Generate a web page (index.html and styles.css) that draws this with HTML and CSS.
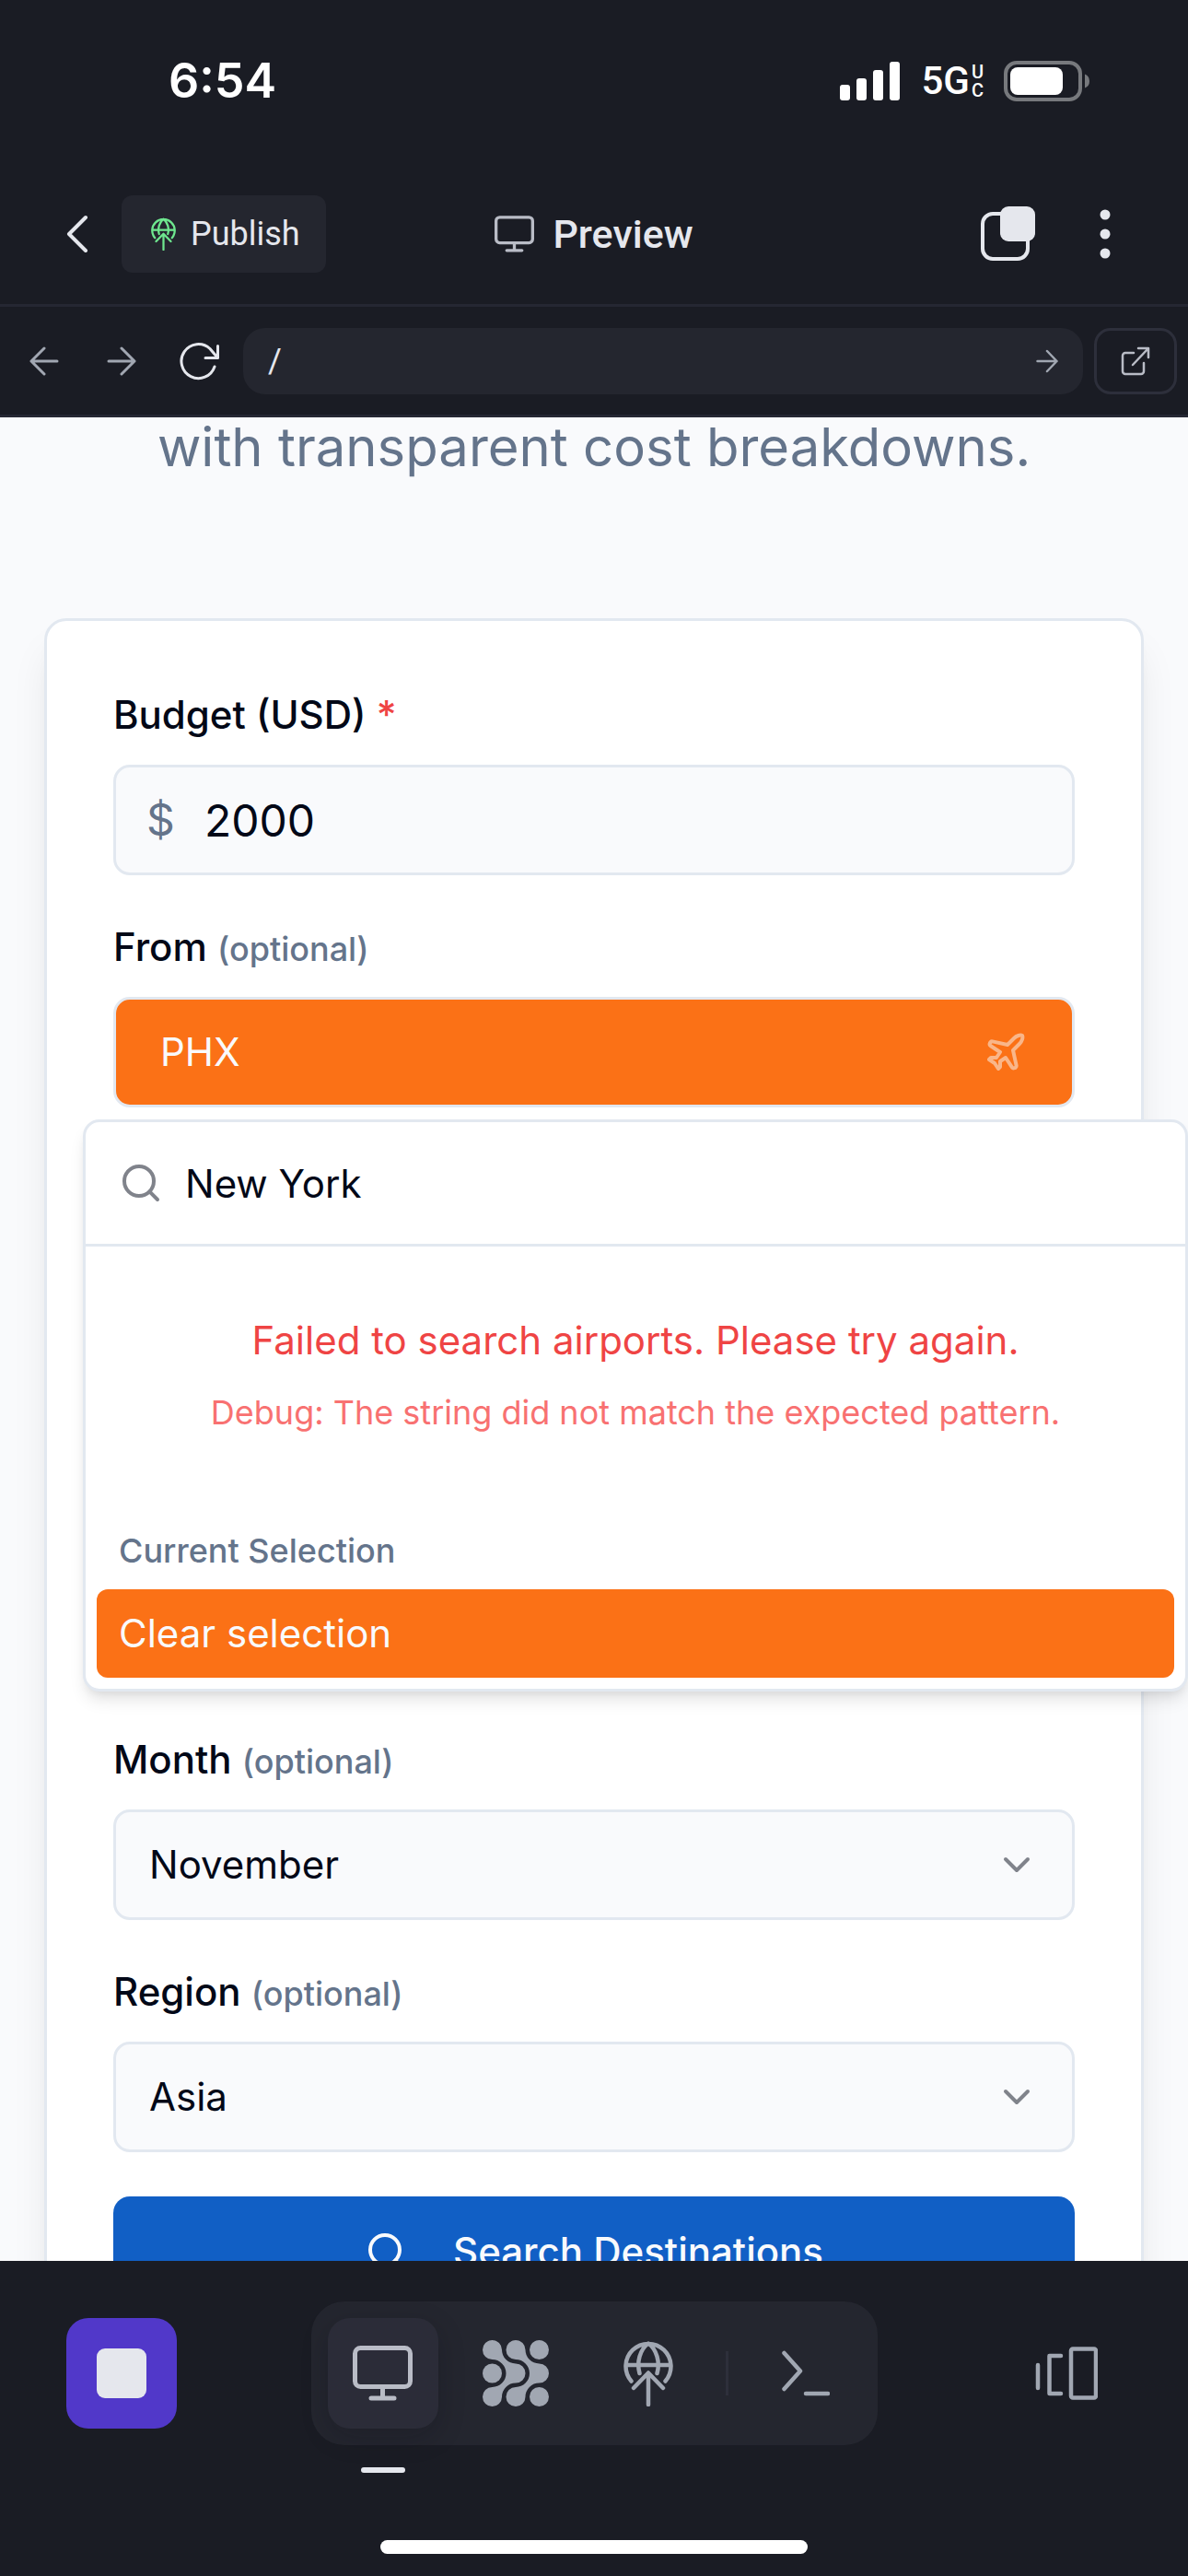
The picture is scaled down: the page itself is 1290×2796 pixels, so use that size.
FILE: index.html
```html
<!DOCTYPE html>
<html lang="en">
<head>
<meta charset="utf-8">
<meta name="viewport" content="width=device-width, initial-scale=1">
<title>Preview</title>
<link rel="stylesheet" href="styles.css">
</head>
<body>
<svg class="sprite" aria-hidden="true">
  <symbol id="monitor" viewBox="0 0 65 60">
    <rect x="2.5" y="2.5" width="60" height="42" rx="6"/>
    <path d="M32.5 45v11M20 57h25"/>
  </symbol>
  <symbol id="publish" viewBox="0 0 54 72">
    <path d="M8.5 44.5A24.500 24.500 0 1 1 45.500 44.500M3 27h48M17.500 36C14 24 18 10 27 3.500C36 10 40 24 36.500 36"/>
    <path d="M11 52L27 35.500L43 52M27 37v33"/>
  </symbol>
  <symbol id="search" viewBox="0 0 24 24">
    <circle cx="11" cy="11" r="8"/><path d="m21 21-4.300-4.300"/>
  </symbol>
  <symbol id="chevron" viewBox="0 0 24 24"><path d="m6 9 6 6 6-6"/></symbol>
</svg>

<div class="app">
  <div class="status">
    <time class="clock">6:54</time>
    <div class="indicators">
      <svg width="66" height="42" viewBox="0 0 66 42" fill="#fff" aria-hidden="true">
        <rect x="0" y="25" width="11" height="17" rx="3"/><rect x="18" y="18" width="11" height="24" rx="3"/>
        <rect x="36" y="9" width="11" height="33" rx="3"/><rect x="54" y="0" width="11" height="42" rx="3"/>
      </svg>
      <span class="network">5G<span class="carrier"><span>U</span><span>C</span></span></span>
      <svg width="94" height="44" viewBox="0 0 94 44" aria-hidden="true">
        <rect x="2" y="2" width="81" height="40" rx="12" fill="none" stroke="#77797d" stroke-width="4"/>
        <rect x="7" y="7" width="57" height="30" rx="8" fill="#fff"/>
        <path d="M88 14.500q5 2 5 7.500t-5 7.500z" fill="#77797d"/>
      </svg>
    </div>
  </div>

  <header class="topbar">
    <div class="side">
      <button class="tool" aria-label="Back"><svg class="line light" width="24" height="42" viewBox="0 0 24 42" stroke-width="4"><path d="M21 3L3 21l18 18"/></svg></button>
      <button class="publish"><svg class="line" width="27" height="36" stroke-width="4.500"><use href="#publish"/></svg>Publish</button>
    </div>
    <h1 class="title"><svg class="line" width="43" height="40" stroke-width="5"><use href="#monitor"/></svg>Preview</h1>
    <div class="side end">
      <button class="tool" aria-label="Tabs"><svg width="60" height="60" viewBox="0 0 60 60"><rect x="3" y="8" width="49" height="49" rx="11" fill="none" stroke="#e5e7ed" stroke-width="4"/><rect x="22" y="0" width="38" height="38" rx="9" fill="#e5e7ed"/></svg></button>
      <button class="tool wide" aria-label="More"><svg width="12" height="54" viewBox="0 0 12 54" fill="#e5e7ed"><circle cx="6" cy="6" r="5.500"/><circle cx="6" cy="27" r="5.500"/><circle cx="6" cy="48" r="5.500"/></svg></button>
    </div>
  </header>

  <nav class="addressbar" aria-label="Browser">
    <button class="tool" aria-label="Previous page"><svg class="line muted" width="32" height="32" viewBox="0 0 32 32" stroke-width="3"><path d="M30 16H2M16 2L2 16l14 14"/></svg></button>
    <button class="tool" aria-label="Next page"><svg class="line muted" width="32" height="32" viewBox="0 0 32 32" stroke-width="3"><path d="M2 16h28M16 2l14 14-14 14"/></svg></button>
    <button class="tool" aria-label="Reload"><svg class="line light" width="44" height="42" viewBox="0 0 44 42" stroke-width="3"><path d="M39 27A18.500 18.500 0 1 1 34 7.500L42.500 17.500M42.500 4.500v13H29"/></svg></button>
    <div class="address">
      <input class="path" type="text" value="/" aria-label="Path">
      <button class="go" aria-label="Go"><svg class="line muted" width="24" height="26" viewBox="0 0 24 26" stroke-width="2.500"><path d="M1.500 13h21M12 2l10.500 11L12 24"/></svg></button>
    </div>
    <button class="external" aria-label="Open in new tab"><svg class="line" width="32" height="32" viewBox="0 0 32 32" stroke-width="2.500"><path d="M14 7H5a3 3 0 0 0-3 3v17a3 3 0 0 0 3 3h17a3 3 0 0 0 3-3V18M13 20L30 2M19 2h11v10"/></svg></button>
  </nav>

  <main class="preview">
    <p class="intro">with transparent cost breakdowns.</p>
    <form class="card">
      <div class="field">
        <label class="label" for="budget">Budget (USD) <span class="required">*</span></label>
        <div class="control">
          <span class="currency">$</span>
          <input class="amount" id="budget" type="text" value="2000">
        </div>
      </div>
      <div class="field">
        <label class="label" for="from">From <span class="optional">(optional)</span></label>
        <button class="origin" id="from" type="button">PHX
          <svg class="line faded" width="48" height="48" viewBox="0 0 24 24" stroke-width="2"><path d="M17.800 19.200 16 11l3.500-3.500C21 6 21.500 4 21 3c-1-.5-3 0-4.500 1.500L13 8 4.800 6.200c-.5-.1-.9.1-1.100.5l-.3.5c-.2.5-.1 1 .3 1.300L9 12l-2 3H4l-1 1 3 2 2 3 1-1v-3l3-2 3.500 5.300c.3.4.8.5 1.300.3l.5-.2c.4-.3.6-.7.5-1.200z"/></svg>
        </button>
      </div>
      <div class="popover">
        <div class="query">
          <svg class="line gray" width="48" height="48" stroke-width="2"><use href="#search"/></svg>
          <input class="query-input" type="text" value="New York" aria-label="Search airports">
        </div>
        <div class="failure">
          <p class="error">Failed to search airports. Please try again.</p>
          <p class="debug">Debug: The string did not match the expected pattern.</p>
        </div>
        <div class="group">
          <h2 class="group-title">Current Selection</h2>
          <button class="option" type="button">Clear selection</button>
        </div>
      </div>
      <div class="field">
        <label class="label" for="month">Month <span class="optional">(optional)</span></label>
        <div class="control">
          <select class="select" id="month"><option>November</option></select>
          <svg class="line gray caret" width="48" height="48" stroke-width="2"><use href="#chevron"/></svg>
        </div>
      </div>
      <div class="field">
        <label class="label" for="region">Region <span class="optional">(optional)</span></label>
        <div class="control">
          <select class="select" id="region"><option>Asia</option></select>
          <svg class="line gray caret" width="48" height="48" stroke-width="2"><use href="#chevron"/></svg>
        </div>
      </div>
      <button class="submit" type="button"><svg class="line" width="48" height="48" stroke-width="2"><use href="#search"/></svg>Search Destinations</button>
    </form>
  </main>

  <footer class="dock">
    <div class="dock-row">
      <button class="tile stop" aria-label="Stop"><span class="stop-mark"></span></button>
      <div class="tabs">
        <button class="tile active" aria-label="Preview"><svg class="line" width="65" height="60" stroke-width="5"><use href="#monitor"/></svg></button>
        <button class="tile" aria-label="Agent">
          <svg width="72" height="72" viewBox="0 0 72 72" fill="currentColor">
            <circle cx="10.500" cy="36" r="10.500"/><circle cx="61.500" cy="10.500" r="10.500"/><circle cx="61.500" cy="61.500" r="10.500"/>
            <path id="link" d="M10.500 0A10.500 10.500 0 0 0 10.500 21A15 15 0 0 1 10.500 51A10.500 10.500 0 1 0 21 61.500A15 15 0 0 1 36 46.500A10.500 10.500 0 0 0 36 25.500A15 15 0 0 1 21 10.500A10.500 10.500 0 0 0 10.500 0z"/>
            <use href="#link" x="25.500"/>
          </svg>
        </button>
        <button class="tile" aria-label="Publishing"><svg class="line" width="54" height="72" stroke-width="4.500"><use href="#publish"/></svg></button>
        <span class="divider"></span>
        <button class="tile" aria-label="Console"><svg class="line" width="52" height="50" viewBox="0 0 52 50" stroke-width="4.500"><path d="M2.500 3L20 22.500 2.500 42M26 47h24"/></svg></button>
      </div>
      <button class="tile" aria-label="All tabs"><svg class="line" width="68" height="58" viewBox="0 0 68 58" stroke-width="4.500"><path d="M3 20v25M28 10H15.500v41H28"/><rect x="39" y="2.500" width="27" height="53" rx="2"/></svg></button>
    </div>
    <div class="home"></div>
  </footer>
</div>
</body>
</html>
```
FILE: styles.css
```css
* { box-sizing: border-box; }
body { margin: 0; background: #1a1c24; font-family: Inter, "Noto Sans", sans-serif; }
button, input, select { font: inherit; color: inherit; background: none; border: 0; padding: 0; margin: 0; outline: 0; }
h1, h2, p { margin: 0; font-weight: inherit; }
svg { display: block; flex: none; }

.sprite { position: absolute; width: 0; height: 0; }
.line { fill: none; stroke: currentColor; stroke-linecap: round; stroke-linejoin: round; }
.light { color: #e5e7ed; }
.muted { color: #a1a7b2; }
.gray { color: #80838b; }
.faded { opacity: 0.5; }

.app { display: flex; flex-direction: column; height: 100vh; overflow: hidden; color: #e5e7ed; }

/* status bar */
.status { display: flex; align-items: center; justify-content: space-between; height: 177px; padding: 0 106px 2px 183px; color: #fff; flex: none; }
.clock { font-size: 52px; font-weight: 600; line-height: 64px; }
.indicators { display: flex; align-items: center; gap: 22px; }
.network { display: flex; align-items: center; gap: 2px; font: 500 42px/44px Roboto, sans-serif; }
.carrier { display: flex; flex-direction: column; font-size: 20px; line-height: 20px; }

/* editor header */
.topbar { display: grid; grid-template-columns: 1fr auto 1fr; align-items: center; height: 156px; padding: 0 48px; border-bottom: 3px solid #252733; flex: none; font-family: Roboto, sans-serif; }
.side { display: flex; align-items: center; gap: 12px; }
.end { justify-content: flex-end; gap: 28px; }
.tool { display: flex; align-items: center; justify-content: center; width: 72px; height: 72px; flex: none; }
.wide { width: 84px; }
.publish { display: flex; align-items: center; gap: 16px; height: 84px; padding: 0 28px 0 32px; border-radius: 12px; background: #24262f; font-size: 36px; }
.publish svg { color: #6ee78f; }
.title { display: flex; align-items: center; gap: 20px; font-size: 43px; font-weight: 500; line-height: 54px; }
.title svg { color: #b9bcc6; }

.addressbar { display: flex; align-items: center; gap: 12px; height: 120px; padding: 0 12px; border-bottom: 3px solid #252733; flex: none; }
.address { display: flex; align-items: center; flex: 1; min-width: 0; height: 72px; padding: 0 27px; border-radius: 24px; background: #24262f; }
.path { flex: 1; min-width: 0; font: 36px/48px Roboto, sans-serif; }
.external { display: flex; align-items: center; justify-content: center; width: 90px; height: 72px; border: 3px solid #2d2f3b; border-radius: 18px; color: #b9bcc6; }

/* previewed page */
.preview { flex: 1; min-height: 0; overflow: hidden; padding: 0 48px; background: #f9fafc; color: #020817; font-size: 42px; line-height: 60px; }
.intro { margin-bottom: 154px; color: #64748b; font-size: 58px; line-height: 64px; text-align: center; }
.card { display: flex; flex-direction: column; padding: 72px; border: 3px solid #e2e8f0; border-radius: 24px; background: #fff; box-shadow: 0 30px 45px -9px rgb(0 0 0 / 0.1), 0 12px 18px -12px rgb(0 0 0 / 0.1); }
.field { display: flex; flex-direction: column; gap: 24px; margin-bottom: 48px; }
.label { font-weight: 500; }
.required { color: #ef4444; }
.optional { color: #64748b; font-size: 36px; line-height: 48px; }
.control { display: flex; align-items: center; position: relative; height: 120px; border: 3px solid #e2e8f0; border-radius: 18px; background: #f9fafc; }
.currency { padding-left: 33px; width: 96px; color: #64748b; font-size: 48px; }
.amount { flex: 1; min-width: 0; height: 100%; font-size: 48px; }
.select { flex: 1; width: 100%; height: 100%; padding: 0 96px 0 36px; appearance: none; }
.caret { position: absolute; right: 36px; pointer-events: none; }
.origin { display: flex; align-items: center; justify-content: space-between; height: 120px; padding: 0 48px; border: 3px solid #e2e8f0; border-radius: 18px; background: #fb7116; color: #f9fafc; }

.popover { position: relative; margin: -35px -123px 44px -33px; border: 3px solid #e2e8f0; border-radius: 18px; background: #fff; box-shadow: 0 12px 18px -3px rgb(0 0 0 / 0.1), 0 6px 12px -6px rgb(0 0 0 / 0.1); }
.query { display: flex; align-items: center; gap: 24px; height: 135px; padding: 0 36px; border-bottom: 3px solid #e2e8f0; }
.query-input { flex: 1; min-width: 0; height: 100%; }
.failure { display: flex; flex-direction: column; gap: 24px; padding: 72px 24px; text-align: center; }
.error { color: #ef4444; }
.debug { color: #f87171; font-size: 36px; line-height: 48px; }
.group { display: flex; flex-direction: column; padding: 12px; }
.group-title { padding: 18px 24px; color: #64748b; font-size: 36px; font-weight: 500; line-height: 48px; }
.option { padding: 18px 24px; border-radius: 12px; background: #fb7116; color: #f9fafc; text-align: left; }
.submit { display: flex; align-items: center; justify-content: center; gap: 48px; height: 120px; border-radius: 18px; background: #115fc5; color: #f9fafc; font-weight: 500; }

/* bottom dock */
.dock { display: flex; flex-direction: column; align-items: center; justify-content: space-between; height: 342px; padding: 44px 0 24px; flex: none; color: #a1a7b2; }
.dock-row { display: flex; align-items: center; justify-content: space-between; width: 100%; padding: 0 72px; }
.tile { display: flex; align-items: center; justify-content: center; position: relative; width: 120px; height: 120px; border-radius: 24px; flex: none; }
.stop { background: #5138c9; }
.stop-mark { width: 54px; height: 54px; border-radius: 9px; background: #e5e7ed; }
.tabs { display: flex; align-items: center; gap: 24px; padding: 18px; border-radius: 36px; background: #24262f; }
.active { background: #2b2c38; color: #b9bcc6; box-shadow: 0 9px 30px rgb(10 10 20 / 0.2); }
.active::after { content: ""; position: absolute; bottom: -48px; width: 48px; height: 6px; border-radius: 3px; background: #e5e7ed; }
.divider { width: 3px; height: 48px; background: #2d2f3b; }
.home { width: 36%; height: 15px; border-radius: 8px; background: #fff; }
```
